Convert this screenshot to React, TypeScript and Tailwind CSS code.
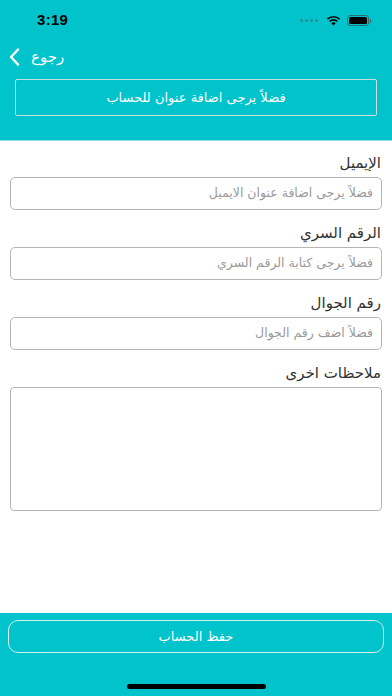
import React from "react";

const font = { fontFamily: '"DejaVu Sans", "Noto Sans", sans-serif' };

function Field({ label, placeholder }: { label: string; placeholder: string }) {
  return (
    <div className="flex flex-col">
      <div dir="rtl" className="h-[22px] px-[11px] text-[15px] leading-[22px] text-[#333]">
        {label}
      </div>
      <div
        dir="rtl"
        className="mt-[3px] mx-[10px] h-[33px] rounded-[5px] border border-[#b5b5b5] px-[8px] flex items-center text-[12.5px] text-[#9a9a9a]"
      >
        {placeholder}
      </div>
    </div>
  );
}

export default function App() {
  return (
    <div style={font} className="w-[392px] h-[696px] flex flex-col bg-white overflow-hidden">
      <div className="h-[141px] bg-[#00c3cb] border-b border-[#8fe3e6] flex flex-col">
        <div className="h-[40px] flex items-center justify-between pl-[37px] pr-[21px] pt-[1px]">
          <span className="text-[15px] font-bold text-black tracking-[0.3px]" style={{ fontFamily: '"Liberation Sans", sans-serif' }}>3:19</span>
          <div className="flex items-center gap-[6px]">
            <div className="flex gap-[2px] mr-[2px]">
              <span className="w-[3px] h-[3px] rounded-full bg-[#2a8d92]" />
              <span className="w-[3px] h-[3px] rounded-full bg-[#2a8d92]" />
              <span className="w-[3px] h-[3px] rounded-full bg-[#2a8d92]" />
              <span className="w-[3px] h-[3px] rounded-full bg-[#2a8d92]" />
            </div>
            <svg width="15" height="11" viewBox="0 0 15 11">
              <path d="M7.5 10.5 L5.3 8.2 A3.2 3.2 0 0 1 9.7 8.2 Z" fill="#000" />
              <path d="M3.6 6.5 A5.6 5.6 0 0 1 11.4 6.5" stroke="#000" strokeWidth="1.7" fill="none" />
              <path d="M1.4 4.2 A8.8 8.8 0 0 1 13.6 4.2" stroke="#000" strokeWidth="1.7" fill="none" />
            </svg>
            <div className="flex items-center">
              <div className="w-[22px] h-[11px] rounded-[3px] border border-[#2a6f73] p-[1px]">
                <div className="w-full h-full rounded-[1.5px] bg-black" />
              </div>
              <div className="w-[1.5px] h-[4px] bg-[#2a6f73] ml-[1px] rounded-r" />
            </div>
          </div>
        </div>
        <div className="h-[34px] flex items-center pl-[9px]">
          <svg width="11" height="18" viewBox="0 0 11 18">
            <path d="M9 1.5 L2 9 L9 16.5" stroke="#fff" strokeWidth="2.4" fill="none" strokeLinecap="round" strokeLinejoin="round" />
          </svg>
          <span dir="rtl" className="ml-[11px] text-[15px] text-white">رجوع</span>
        </div>
        <div className="mt-[5px] mx-[15px] h-[37px] border border-[#c9dfe0] rounded-[2px] flex items-center justify-center">
          <span dir="rtl" className="text-[13px] text-white">فضلاً يرجى اضافة عنوان للحساب</span>
        </div>
      </div>

      <div className="flex-1 flex flex-col pt-[11px]">
        <div className="flex flex-col gap-[12px]">
          <Field label="الإيميل" placeholder="فضلاً يرجى اضافة عنوان الايميل" />
          <Field label="الرقم السري" placeholder="فضلاً يرجى كتابة الرقم السري" />
          <Field label="رقم الجوال" placeholder="فضلاً اضف رقم الجوال" />
          <div className="flex flex-col">
            <div dir="rtl" className="h-[22px] px-[11px] text-[15px] leading-[22px] text-[#333]">
              ملاحظات اخرى
            </div>
            <div className="mt-[3px] mx-[10px] h-[124px] rounded-[4px] border border-[#b5b5b5]" />
          </div>
        </div>
      </div>

      <div className="h-[83px] bg-[#00c3cb] flex flex-col items-center">
        <div className="mt-[7px] w-[376px] h-[33px] rounded-[10px] border border-[#d6f1f2] flex items-center justify-center">
          <span dir="rtl" className="text-[13px] text-white">حفظ الحساب</span>
        </div>
        <div className="mt-[31px] w-[139px] h-[5px] rounded-full bg-black" />
      </div>
    </div>
  );
}
